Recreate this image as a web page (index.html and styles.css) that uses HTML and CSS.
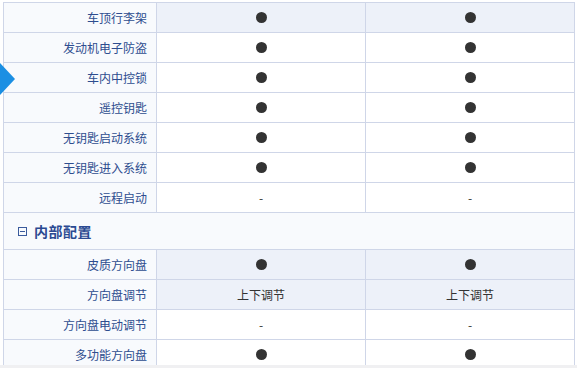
FILE: index.html
```html
<!DOCTYPE html>
<html lang="zh-CN">
<head>
<meta charset="utf-8">
<title>参数配置</title>
<link rel="stylesheet" href="styles.css">
</head>
<body>
<div class="page">
  <div class="tab-arrow"></div>
  <div class="spec">
    <div class="row hl"><div class="label">车顶行李架</div><div class="val"><span class="dot"></span></div><div class="val last"><span class="dot"></span></div></div>
    <div class="row"><div class="label">发动机电子防盗</div><div class="val"><span class="dot"></span></div><div class="val last"><span class="dot"></span></div></div>
    <div class="row"><div class="label">车内中控锁</div><div class="val"><span class="dot"></span></div><div class="val last"><span class="dot"></span></div></div>
    <div class="row"><div class="label">遥控钥匙</div><div class="val"><span class="dot"></span></div><div class="val last"><span class="dot"></span></div></div>
    <div class="row"><div class="label">无钥匙启动系统</div><div class="val"><span class="dot"></span></div><div class="val last"><span class="dot"></span></div></div>
    <div class="row"><div class="label">无钥匙进入系统</div><div class="val"><span class="dot"></span></div><div class="val last"><span class="dot"></span></div></div>
    <div class="row"><div class="label">远程启动</div><div class="val">-</div><div class="val last">-</div></div>
    <div class="section">
      <span class="toggle"></span>
      <span class="section-title">内部配置</span>
    </div>
    <div class="row hl"><div class="label">皮质方向盘</div><div class="val"><span class="dot"></span></div><div class="val last"><span class="dot"></span></div></div>
    <div class="row hl"><div class="label">方向盘调节</div><div class="val">上下调节</div><div class="val last">上下调节</div></div>
    <div class="row"><div class="label">方向盘电动调节</div><div class="val">-</div><div class="val last">-</div></div>
    <div class="row"><div class="label">多功能方向盘</div><div class="val"><span class="dot"></span></div><div class="val last"><span class="dot"></span></div></div>
  </div>
</div>
</body>
</html>
```

FILE: styles.css
```css
html, body {
  margin: 0;
  padding: 0;
  background: #f0f0f2;
}

body {
  font-family: "Noto Sans CJK SC", "Noto Sans", sans-serif;
  font-size: 12px;
}

.page {
  position: relative;
  height: 365px;
  overflow: hidden;
  background: #ffffff;
  padding: 2px 0 0 3px;
  box-sizing: border-box;
}

.tab-arrow {
  position: absolute;
  left: 0;
  top: 63px;
  width: 15px;
  height: 32px;
  background: #1b8fe3;
  clip-path: polygon(0 0, 100% 50%, 0 100%);
}

.spec {
  width: 572px;
}

.row {
  display: grid;
  grid-template-columns: 153px 209px 210px;
  height: 30px;
}

.row > div {
  box-sizing: border-box;
  border-top: 1px solid #cfd6e8;
  border-left: 1px solid #cfd6e8;
  display: flex;
  align-items: center;
  line-height: 1;
}

.row > .last {
  border-right: 1px solid #cfd6e8;
}

.label {
  justify-content: flex-end;
  padding-right: 9px;
  background: #f8fafd;
  color: #2e4d8f;
}

.val {
  justify-content: center;
  background: #ffffff;
  color: #333333;
}

.row.hl .val {
  background: #edf1f9;
}

.dot {
  width: 11px;
  height: 11px;
  border-radius: 50%;
  background: #333333;
}

.section {
  box-sizing: border-box;
  height: 37px;
  border-top: 1px solid #cfd6e8;
  border-left: 1px solid #cfd6e8;
  border-right: 1px solid #cfd6e8;
  background: #f8fafd;
  display: flex;
  align-items: center;
  padding-left: 14px;
  gap: 7px;
}

.toggle {
  position: relative;
  width: 9px;
  height: 9px;
  box-sizing: border-box;
  border: 1px solid #3a5a9c;
}

.toggle::after {
  content: "";
  position: absolute;
  left: 1px;
  right: 1px;
  top: 3px;
  height: 1px;
  background: #3a5a9c;
}

.section-title {
  font-size: 14px;
  font-weight: bold;
  color: #2b4a92;
  letter-spacing: 0.5px;
}
```
